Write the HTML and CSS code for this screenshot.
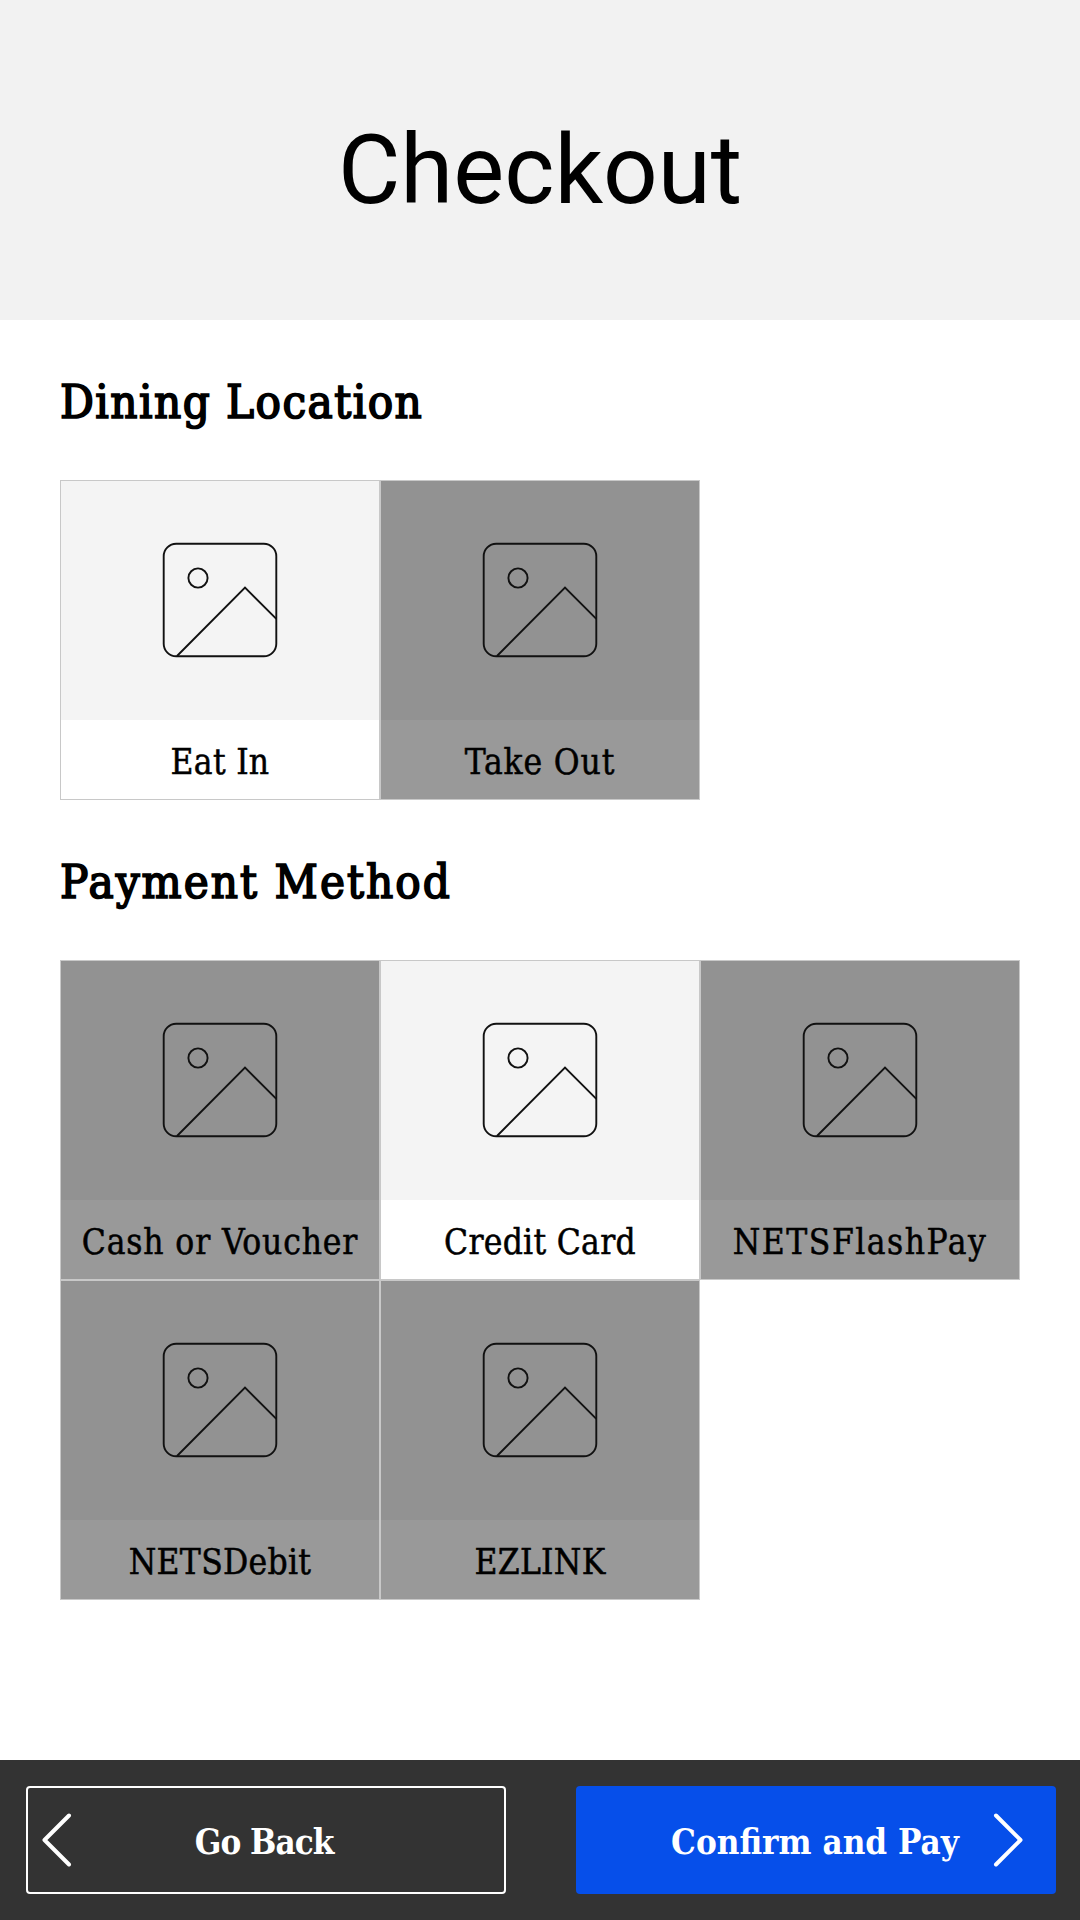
FILE: index.html
```html
<!DOCTYPE html>
<html lang="en">
<head>
<meta charset="utf-8">
<title>Checkout</title>
<link rel="stylesheet" href="styles.css">
</head>
<body>
<svg class="defs" width="0" height="0" aria-hidden="true">
  <symbol id="picture" viewBox="0 0 116 116">
    <rect x="1.7" y="1.7" width="112.6" height="112.6" rx="12.5"/>
    <circle cx="36" cy="36" r="9.6"/>
    <path d="M15 114 83 45.6l31.3 31.3"/>
  </symbol>
</svg>
<header class="header"><h1>Checkout</h1></header>
<main class="main">
  <section>
    <h2 class="heading">Dining Location</h2>
    <div class="options">
      <div class="option selected"><div class="thumb"><svg class="icon"><use href="#picture"/></svg></div><div class="label">Eat In</div></div>
      <div class="option"><div class="thumb"><svg class="icon"><use href="#picture"/></svg></div><div class="label label-loose">Take Out</div></div>
    </div>
  </section>
  <section>
    <h2 class="heading heading-loose">Payment Method</h2>
    <div class="options">
      <div class="option"><div class="thumb"><svg class="icon"><use href="#picture"/></svg></div><div class="label label-loose">Cash or Voucher</div></div>
      <div class="option selected"><div class="thumb"><svg class="icon"><use href="#picture"/></svg></div><div class="label">Credit Card</div></div>
      <div class="option"><div class="thumb"><svg class="icon"><use href="#picture"/></svg></div><div class="label label-wide">NETSFlashPay</div></div>
      <div class="option"><div class="thumb"><svg class="icon"><use href="#picture"/></svg></div><div class="label">NETSDebit</div></div>
      <div class="option"><div class="thumb"><svg class="icon"><use href="#picture"/></svg></div><div class="label">EZLINK</div></div>
    </div>
  </section>
</main>
<footer class="footer">
  <button class="button back"><svg class="chevron chevron-left" viewBox="0 0 30 54"><path d="M27 2.5 2.5 27 27 51.5"/></svg><span>Go Back</span></button>
  <button class="button confirm"><span>Confirm and Pay</span><svg class="chevron chevron-right" viewBox="0 0 30 54"><path d="M3 2.5 27.5 27 3 51.5"/></svg></button>
</footer>
</body>
</html>
```
FILE: styles.css
```css
* { box-sizing: border-box; }

body {
  margin: 0;
  height: 1920px;
  display: flex;
  flex-direction: column;
  background: #fff;
  color: #000;
  font-family: "Roboto Slab", "DejaVu Serif", serif;
  font-stretch: condensed;
}

.defs { position: absolute; }

.header {
  height: 320px;
  padding-top: 20px;
  display: flex;
  align-items: center;
  justify-content: center;
  background: #f2f2f2;
}

.header h1 {
  margin: 0;
  font: 400 96px Roboto, sans-serif;
}

.main { flex: 1; padding: 0 60px; }

.heading {
  margin: 0;
  height: 160px;
  padding-top: 3px;
  display: flex;
  align-items: center;
  font-size: 47px;
  font-weight: 400;
  letter-spacing: 1.45px;
  -webkit-text-stroke: 1.7px #000;
}

.heading-loose { letter-spacing: 2.05px; }

.options {
  display: grid;
  grid-template-columns: repeat(3, 320px);
}

.option {
  height: 320px;
  border: 1px solid #c8c8c8;
  background: #999;
}

.thumb {
  height: 239px;
  padding-bottom: 1px;
  display: flex;
  align-items: center;
  justify-content: center;
  background: #929292;
}

.selected { background: #fff; }
.selected .thumb { background: #f4f4f4; }

.icon {
  width: 116px;
  height: 116px;
  fill: none;
  stroke: #111;
  stroke-width: 1.9;
}

.label {
  height: 79px;
  padding-top: 4px;
  display: flex;
  align-items: center;
  justify-content: center;
  font-size: 35px;
  letter-spacing: .3px;
  white-space: nowrap;
  -webkit-text-stroke: .5px #000;
}

.label-loose { letter-spacing: .85px; }
.label-wide { letter-spacing: 1.5px; }

.footer {
  height: 160px;
  padding: 0 24px 0 26px;
  display: flex;
  align-items: center;
  justify-content: space-between;
  background: #333;
}

.button {
  position: relative;
  width: 480px;
  height: 108px;
  padding: 3px 2px 0 0;
  border: 0;
  border-radius: 4px;
  color: #fff;
  font: inherit;
  font-size: 34.7px;
  font-weight: 700;
  font-stretch: condensed;
}

.back {
  padding: 3px 4px 0 0;
  border: 2px solid #fff;
  background: transparent;
  letter-spacing: -1px;
}

.confirm { background: #064fea; }

.chevron {
  position: absolute;
  top: 50%;
  width: 30px;
  height: 54px;
  transform: translateY(-50%);
  fill: none;
  stroke: #fff;
  stroke-width: 4;
  stroke-linecap: round;
  stroke-linejoin: round;
}

.chevron-left { left: 14px; }
.chevron-right { right: 33px; }
```
